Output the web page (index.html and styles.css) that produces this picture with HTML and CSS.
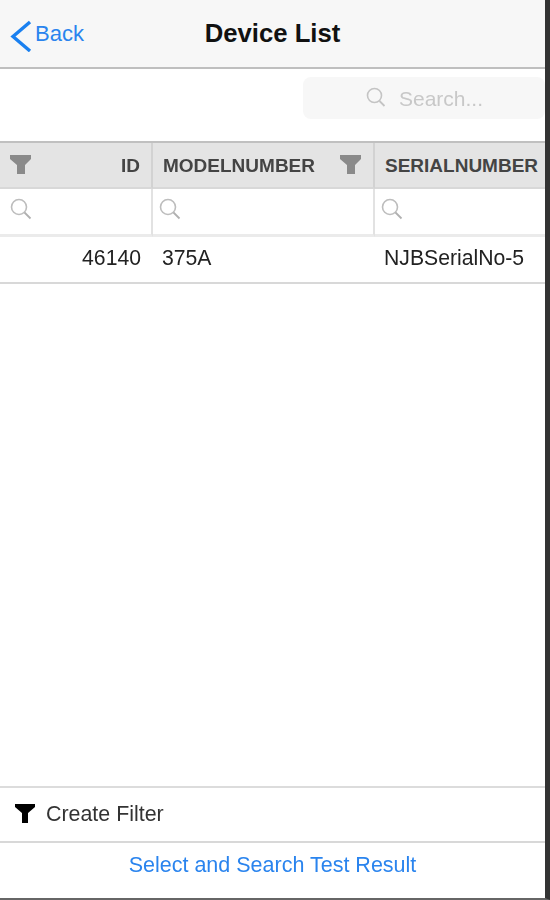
FILE: index.html
```html
<!DOCTYPE html>
<html lang="en">
<head>
<meta charset="utf-8">
<title>Device List</title>
<link rel="stylesheet" href="styles.css">
</head>
<body>
<div class="screen">
  <div class="app">
    <header class="nav">
      <a class="back">
        <svg class="back-icon" width="22" height="32" viewBox="0 0 22 32"><path d="M20 2 L3 16.5 L20 31" fill="none" stroke="#1a80f0" stroke-width="3.4"/></svg>
        <span>Back</span>
      </a>
      <h1 class="title">Device List</h1>
    </header>
    <div class="toolbar">
      <div class="search">
        <svg class="lens lens-light" width="20" height="20" viewBox="0 0 20 20"><circle cx="8.5" cy="8.5" r="7" fill="none" stroke="#c4c4c4" stroke-width="1.6"/><path d="M13.5 14 L18.5 19" stroke="#c4c4c4" stroke-width="1.8"/></svg>
        <span>Search...</span>
      </div>
    </div>
    <div class="grid">
      <div class="cell head head-id">
        <svg class="funnel" width="22" height="20" viewBox="0 0 22 20"><path d="M0 0H21V4L15 10V19H7V10L0 4Z" fill="#8a8a8a"/></svg>
        <span>ID</span>
      </div>
      <div class="cell head head-model">
        <span>MODELNUMBER</span>
        <svg class="funnel" width="22" height="20" viewBox="0 0 22 20"><path d="M0 0H21V4L15 10V19H7V10L0 4Z" fill="#8a8a8a"/></svg>
      </div>
      <div class="cell head"><span>SERIALNUMBER</span></div>

      <div class="cell filter filter-first"><svg class="lens" width="22" height="22" viewBox="0 0 22 22"><circle cx="9" cy="9" r="7.5" fill="none" stroke="#bdbdbd" stroke-width="1.6"/><path d="M14.5 14.5 L20.5 20.5" stroke="#b0b0b0" stroke-width="1.8"/></svg></div>
      <div class="cell filter"><svg class="lens" width="22" height="22" viewBox="0 0 22 22"><circle cx="9" cy="9" r="7.5" fill="none" stroke="#bdbdbd" stroke-width="1.6"/><path d="M14.5 14.5 L20.5 20.5" stroke="#b0b0b0" stroke-width="1.8"/></svg></div>
      <div class="cell filter"><svg class="lens" width="22" height="22" viewBox="0 0 22 22"><circle cx="9" cy="9" r="7.5" fill="none" stroke="#bdbdbd" stroke-width="1.6"/><path d="M14.5 14.5 L20.5 20.5" stroke="#b0b0b0" stroke-width="1.8"/></svg></div>

      <div class="cell data num">46140</div>
      <div class="cell data">375A</div>
      <div class="cell data">NJBSerialNo-5</div>
    </div>
    <div class="spacer"></div>
    <div class="create">
      <svg width="20" height="19" viewBox="0 0 20 19"><path d="M0 0H20V3L13 9V19H7V9L0 3Z" fill="#000"/></svg>
      <span>Create Filter</span>
    </div>
    <a class="action">Select and Search Test Result</a>
  </div>
</div>
</body>
</html>
```
FILE: styles.css
```css
* { box-sizing: border-box; }
html, body { margin: 0; padding: 0; background: #fff; }
body { width: 550px; height: 900px; overflow: hidden; font-family: "Liberation Sans", Arial, sans-serif; }
.screen { width: 550px; height: 900px; border-right: 5px solid #333; border-bottom: 2px solid #666; filter: blur(0.45px); }
.app { height: 898px; display: flex; flex-direction: column; }
.nav { height: 69px; flex: none; display: flex; align-items: center; justify-content: center; position: relative; background: #f7f7f7; border-bottom: 2px solid #bfbfbf; }
.back { position: absolute; left: 10px; top: 20px; display: flex; align-items: flex-start; color: #2a84ee; font-size: 22px; gap: 3px; }
.back-icon { display: block; }
.back span { line-height: 28px; }
.title { margin: 0 0 1px 0; font-size: 25.7px; font-weight: bold; color: #111; }
.toolbar { height: 72px; flex: none; display: flex; justify-content: flex-end; align-items: flex-start; padding-top: 8px; }
.search { width: 242px; height: 42px; background: #f7f7f7; border-radius: 8px; display: flex; align-items: center; color: #c8c8c8; font-size: 21px; padding-left: 63px; gap: 13px; }
.search span { position: relative; top: 1px; }
.search .lens { margin-top: -2px; }
.grid { flex: none; display: grid; grid-template-columns: 153px 222px minmax(0, 1fr); grid-template-rows: 46px 48px 47px; border-top: 2px solid #c0c0c0; }
.cell { display: flex; align-items: center; border-right: 2px solid #e2e2e2; }
.cell:nth-child(3n) { border-right: 0; }
.head { background: #e4e4e4; color: #444; font-weight: bold; font-size: 19px; padding: 2px 11px 0 10px; justify-content: space-between; white-space: nowrap; border-right-color: #d2d2d2; border-bottom: 2px solid #d8d8d8; }
.head .funnel { margin-top: -2px; }
.filter { padding: 0 0 6px 6px; border-bottom: 3px solid #ebebeb; }
.filter-first { padding-left: 10px; }
.data { padding: 0 9px 3px; font-size: 21.2px; color: #222; border-right: 0; border-bottom: 2px solid #d8d8d8; }
.num { justify-content: flex-end; padding-right: 12px; }
.spacer { flex: 1; }
.create { height: 57px; flex: none; display: flex; align-items: center; gap: 11px; padding-left: 15px; font-size: 21.4px; color: #333; border-top: 2px solid #dcdcdc; border-bottom: 2px solid #d8d8d8; }
.create svg { margin-top: -2px; }
.action { height: 55px; flex: none; display: flex; justify-content: center; align-items: center; padding-bottom: 10px; color: #2a84ee; font-size: 21.5px; }
```
